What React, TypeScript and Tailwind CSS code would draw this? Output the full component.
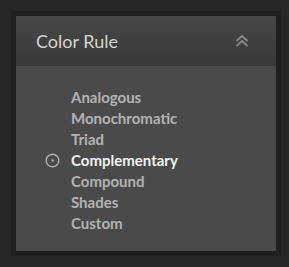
const RULES = [
  "Analogous",
  "Monochromatic",
  "Triad",
  "Complementary",
  "Compound",
  "Shades",
  "Custom",
];

export default function App() {
  const selected = "Complementary";

  return (
    <div className="w-[289px] h-[267px] bg-[#262626] p-[11px] font-['Lato',sans-serif]">
      <div className="w-[270px] h-[245px] bg-[#1f1f1f] p-[5px]">
        <div className="h-full flex flex-col bg-[#4a4a4a]">
          <div className="h-[50px] shrink-0 flex items-center justify-between pl-5 pr-[27px] bg-gradient-to-b from-[#474747] to-[#393939]">
            <h2 className="text-[18px] text-[#d4d4d4] leading-none">Color Rule</h2>
            <svg
              className="w-[14px] h-[14px] text-[#8a8a8a]"
              viewBox="0 0 14 14"
              fill="none"
              stroke="currentColor"
              strokeWidth={1.7}
            >
              <path d="M1.5 7L7 2 12.5 7" />
              <path d="M1.5 12L7 7 12.5 12" />
            </svg>
          </div>

          <ul className="pt-[21px] flex flex-col">
            {RULES.map((rule) => {
              const active = rule === selected;
              return (
                <li key={rule} className="h-[21px] flex items-center">
                  <span className="w-[55px] flex justify-end pr-[11px]">
                    {active && (
                      <svg className="w-[15px] h-[15px]" viewBox="0 0 15 15">
                        <circle
                          cx="7.5"
                          cy="7.5"
                          r="6.3"
                          fill="none"
                          stroke="#b0b0b0"
                          strokeWidth={1.4}
                        />
                        <circle cx="7.5" cy="7.5" r="1.2" fill="#b0b0b0" />
                      </svg>
                    )}
                  </span>
                  <span
                    className={`text-[15px] font-bold leading-none ${
                      active ? "text-[#f2f2f2]" : "text-[#b3b3b3]"
                    }`}
                  >
                    {rule}
                  </span>
                </li>
              );
            })}
          </ul>
        </div>
      </div>
    </div>
  );
}
